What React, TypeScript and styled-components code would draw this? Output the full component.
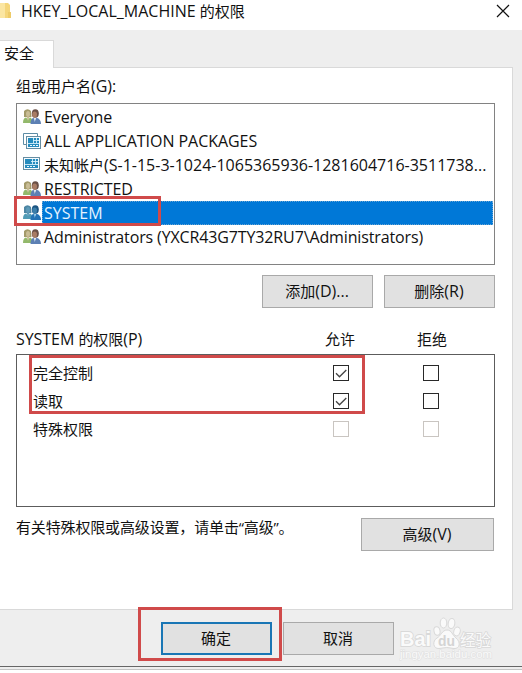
import React from 'react';
import styled, { createGlobalStyle } from 'styled-components';

const GlobalStyle = createGlobalStyle`
  * { box-sizing: border-box; }
  html, body { margin: 0; padding: 0; background: #fff; overflow: hidden; }
  body { font-family: "Open Sans", "Noto Sans CJK SC", sans-serif; font-size: 15px; color: #111; }
  svg { display: block; flex: none; }
`;

const Dialog = styled.div`
  position: relative;
  width: 522px;
  height: 673px;
  background: #fff;
  display: flex;
  flex-direction: column;
  overflow: hidden;
`;

const Line = styled.span<{ $ls?: number; $light?: boolean }>`
  line-height: 20px;
  height: 20px;
  white-space: pre;
  letter-spacing: ${(p) => p.$ls ?? 0}px;
  color: ${(p) => (p.$light ? '#e4f3ff' : 'inherit')};
`;

const Latin = styled.span`
  font-size: 16px;
  line-height: 1;
`;

/* Latin runs are set one pixel larger than the Chinese characters beside them. */
const Text = ({ children, ls, light }: { children: string; ls?: number; light?: boolean }) => (
  <Line $ls={ls} $light={light}>
    {children
      .split(/([\x20-\x7e]+)/)
      .filter(Boolean)
      .map((part, i) => (/^[\x20-\x7e]/.test(part) ? <Latin key={i}>{part}</Latin> : part))}
  </Line>
);

const TitleBar = styled.header`
  height: 30px;
  flex: none;
  display: flex;
  align-items: flex-start;
  padding: 1px 12px 0 0;
`;

const TitleText = styled.h1`
  margin: 0 auto 0 10px;
  font-size: 15px;
  font-weight: 400;
  display: flex;
`;

const CloseButton = styled.button`
  border: 0;
  padding: 0;
  margin-top: 3px;
  background: none;
`;

const Body = styled.main`
  height: 636px;
  flex: none;
  background: #eee;
  display: flex;
  flex-direction: column;
`;

const TabStrip = styled.nav`
  height: 37px;
  padding-top: 10px;
  flex: none;
`;

const Tab = styled.div`
  position: relative;
  width: 54px;
  height: 28px;
  background: #fff;
  border: 1px solid #d9d9d9;
  border-width: 1px 1px 0 0;
  padding: 2px 0 0 4px;
  display: flex;
`;

const Page = styled.section`
  width: 513px;
  height: 543px;
  flex: none;
  background: #fff;
  border: 1px solid #d9d9d9;
  border-left: 0;
  padding: 8px 17px 0 16px;
`;

const Label = styled.div`
  height: 27px;
  display: flex;
`;

const UserList = styled.ul`
  list-style: none;
  margin: 0;
  padding: 1px;
  width: 479px;
  height: 162px;
  border: 1px solid #828282;
`;

const UserRow = styled.li`
  height: 24px;
  display: flex;
  align-items: stretch;
  padding-left: 5px;
`;

const IconSlot = styled.div`
  width: 19px;
  flex: none;
  padding-top: 4px;
`;

const UserName = styled.div<{ $selected?: boolean }>`
  flex: 1;
  padding: ${(p) => (p.$selected ? '1px 0 0 1px' : '2px 0 0 2px')};
  display: flex;
  background: ${(p) => (p.$selected ? '#0078d7' : 'transparent')};
  border: ${(p) => (p.$selected ? '1px dotted #69a4d2' : '0')};
`;

const ButtonRow = styled.div`
  display: flex;
  justify-content: flex-end;
  gap: 11px;
  margin-top: 10px;
`;

const Button = styled.button<{ $width?: number; $primary?: boolean }>`
  width: ${(p) => p.$width ?? 111}px;
  height: 33px;
  flex: none;
  padding: 0 1px 2px 0;
  font: inherit;
  color: inherit;
  background: #e1e1e1;
  border: ${(p) => (p.$primary ? '2px solid #1976b5' : '1px solid #a9a9a9')};
  display: flex;
  align-items: center;
  justify-content: center;
`;

const PermissionHeader = styled.div`
  display: grid;
  grid-template-columns: 309px 92px 78px;
  height: 25px;
  margin-top: 21px;
`;

const PermissionBox = styled.div`
  height: 153px;
  width: 479px;
  border: 1px solid #5c5c5c;
  padding: 4px 0 0 16px;
`;

const PermissionRow = styled.div`
  display: grid;
  grid-template-columns: 300px 90px 60px;
  align-items: center;
  height: 28px;
`;

const PermissionName = styled.div`
  display: flex;
`;

const Check = styled.div<{ $disabled?: boolean }>`
  width: 16px;
  height: 16px;
  border: 1px solid ${(p) => (p.$disabled ? '#c9c5c1' : '#292929')};
  background: #fff;
`;

const Advanced = styled.div`
  display: flex;
  justify-content: space-between;
  width: 478px;
  padding-top: 11px;
`;

const Note = styled.div`
  display: flex;
  height: 20px;
  margin-top: -1px;
`;

const Footer = styled.footer`
  display: flex;
  gap: 11px;
  padding: 12px 0 0 161px;
`;

const Watermark = styled.div`
  width: 98px;
  height: 48px;
  margin: -6px 0 0 -6px;
`;

const BottomEdge = styled.div`
  height: 4px;
  flex: none;
  border-top: 1px solid #666;
  border-bottom: 1px solid #c4c4c4;
  background: #eee;
`;

const Highlight = styled.div<{ $x: number; $y: number; $w: number; $h: number }>`
  position: absolute;
  left: ${(p) => p.$x}px;
  top: ${(p) => p.$y}px;
  width: ${(p) => p.$w}px;
  height: ${(p) => p.$h}px;
  border: 3px solid #d04a4a;
  pointer-events: none;
`;

const UsersIcon = ({ selected }: { selected?: boolean }) => {
  const c = selected
    ? { hair: '#4d86a3', face: '#5d9ab8', shirt: '#4f9bb5', hair2: '#1d5582', face2: '#3b7eaa', suit: '#2373b5' }
    : { hair: '#a39a6a', face: '#c9bd96', shirt: '#93b96b', hair2: '#6a5046', face2: '#a97c64', suit: '#5d80b4' };
  return (
    <svg width="18" height="16" viewBox="0 0 18 16">
      <path d="M1 2Q4.5-1.5 8 2L8.5 8H1Z" fill={c.hair} />
      <ellipse cx="5" cy="5" rx="2" ry="3" fill={c.face} />
      <path d="M0 14Q0 9 3 8.5L5 10.5 7 8.5Q9.5 9 9.5 14Z" fill={c.shirt} />
      <path d="M3.6 8L5 12 6.5 8Z" fill={c.face} />
      <ellipse cx="12.3" cy="4.5" rx="3.5" ry="4.3" fill={c.hair2} />
      <ellipse cx="11.6" cy="5.6" rx="2.4" ry="3.2" fill={c.face2} />
      <path d="M7.5 15Q7.5 10 10.5 8.8L12 11 13.5 8.8Q18 10 18 15Z" fill={c.suit} />
      <path d="M10.8 9L11.8 13 12.9 9Z" fill={selected ? '#8ac3e3' : '#dde5ee'} />
    </svg>
  );
};

const PackageIcon = ({ stacked }: { stacked?: boolean }) => (
  <svg width="18" height="16" viewBox="0 0 18 16">
    {stacked && <path d="M.5 11.5V.5H14.5V3M.5 11.5H3" fill="none" stroke="#5d8ca5" />}
    <g transform={stacked ? 'translate(3 3)' : undefined}>
      <rect x=".5" y=".5" width={stacked ? 14 : 16} height="12" fill="#f4fbff" stroke="#668da2" />
      <rect x="2" y="2" width={stacked ? 11 : 13} height="9" fill="#258bbd" />
      <path
        d={stacked ? 'M7.5 2V7M10.5 2V7M7 4.5H13M2 7.5H13' : 'M9.5 2V7M12.5 2V7M8 4.5H15M2 7.5H15'}
        stroke="#d6effa"
        strokeWidth=".9"
      />
      <path d="M4 9.5H12" stroke="#e8f8ff" strokeDasharray="2 1" />
    </g>
  </svg>
);

const BaiduMark = () => (
  <svg width="98" height="48" viewBox="0 0 98 48">
    <g fill="#fafafa" stroke="#d9d9d9" strokeWidth="1">
      <ellipse cx="38" cy="15" rx="3" ry="4.3" transform="rotate(-12 38 15)" />
      <ellipse cx="44.5" cy="7" rx="3.3" ry="5" />
      <ellipse cx="52.5" cy="7.5" rx="3.3" ry="5" transform="rotate(10 52.5 7.5)" />
      <ellipse cx="58" cy="15.5" rx="3.2" ry="4.5" transform="rotate(16 58 15.5)" />
      <path d="M48 14C43 14 42 20 38 22C33 25 34 33 40 32.5Q48 30.5 55 32.5C61 33 62 26 57 22C53 19 53 14 48 14Z" />
      <text x="1" y="30" paintOrder="stroke" strokeWidth="1.8" fontFamily="Liberation Sans" fontWeight="700" fontSize="21" textLength="31" lengthAdjust="spacingAndGlyphs">Bai</text>
      <text x="61" y="30" paintOrder="stroke" strokeWidth="1.6" fontFamily="Noto Sans CJK SC" fontWeight="400" fontSize="15.5">经验</text>
      <text x="1" y="42" paintOrder="stroke" stroke="#e0e0e0" strokeWidth="1" fontFamily="Liberation Sans" fontSize="10" textLength="92" lengthAdjust="spacingAndGlyphs">jingyan.baidu.com</text>
    </g>
    <text x="39" y="30" fill="#d4d4d4" fontFamily="Liberation Sans" fontWeight="700" fontSize="15" textLength="17" lengthAdjust="spacingAndGlyphs">du</text>
  </svg>
);

const users = [
  { name: 'Everyone', icon: <UsersIcon />, ls: -0.1 },
  { name: 'ALL APPLICATION PACKAGES', icon: <PackageIcon stacked />, ls: -0.05 },
  { name: '未知帐户(S-1-15-3-1024-1065365936-1281604716-3511738...', icon: <PackageIcon />, ls: 0 },
  { name: 'RESTRICTED', icon: <UsersIcon />, ls: -0.15 },
  { name: 'SYSTEM', icon: <UsersIcon selected />, ls: 0, selected: true },
  { name: 'Administrators (YXCR43G7TY32RU7\\Administrators)', icon: <UsersIcon />, ls: -0.13 },
];

const permissions = [
  { name: '完全控制', allow: true },
  { name: '读取', allow: true },
  { name: '特殊权限', allow: false, disabled: true },
];

const CheckMark = () => (
  <svg width="14" height="14" viewBox="0 0 14 14">
    <path d="M2 7.3L5.5 10.8 12.3 4" fill="none" stroke="#444" strokeWidth="1.3" />
  </svg>
);

export default function App() {
  return (
    <>
      <GlobalStyle />
      <Dialog>
        <TitleBar>
          <svg width="11" height="18" viewBox="0 0 11 18">
            <path d="M0 2H8L10 4V17H0Z" fill="#f5d67b" />
            <path d="M0 2H5V17H0Z" fill="#fbe6a2" />
            <path d="M8 11H11V17H8Z" fill="#eecb68" />
          </svg>
          <TitleText>
            <Text>HKEY_LOCAL_MACHINE 的权限</Text>
          </TitleText>
          <CloseButton aria-label="关闭">
            <svg width="14" height="14" viewBox="0 0 14 14">
              <path d="M1 1L13 13M13 1L1 13" stroke="#111" strokeWidth="1.2" />
            </svg>
          </CloseButton>
        </TitleBar>
        <Body>
          <TabStrip>
            <Tab><Text>安全</Text></Tab>
          </TabStrip>
          <Page>
            <Label><Text>组或用户名(G):</Text></Label>
            <UserList>
              {users.map((u) => (
                <UserRow key={u.name}>
                  <IconSlot>{u.icon}</IconSlot>
                  <UserName $selected={u.selected}>
                    <Text ls={u.ls} light={u.selected}>{u.name}</Text>
                  </UserName>
                </UserRow>
              ))}
            </UserList>
            <ButtonRow>
              <Button><Text>添加(D)...</Text></Button>
              <Button><Text>删除(R)</Text></Button>
            </ButtonRow>
            <PermissionHeader>
              <Text ls={-0.05}>SYSTEM 的权限(P)</Text>
              <Text>允许</Text>
              <Text>拒绝</Text>
            </PermissionHeader>
            <PermissionBox>
              {permissions.map((p) => (
                <PermissionRow key={p.name}>
                  <PermissionName><Text>{p.name}</Text></PermissionName>
                  <Check $disabled={p.disabled}>{p.allow && <CheckMark />}</Check>
                  <Check $disabled={p.disabled} />
                </PermissionRow>
              ))}
            </PermissionBox>
            <Advanced>
              <Note><Text ls={-0.15}>有关特殊权限或高级设置，请单击“高级”。</Text></Note>
              <Button $width={133}><Text>高级(V)</Text></Button>
            </Advanced>
          </Page>
          <Footer>
            <Button $primary><Text>确定</Text></Button>
            <Button><Text>取消</Text></Button>
            <Watermark><BaiduMark /></Watermark>
          </Footer>
        </Body>
        <BottomEdge />
        <Highlight $x={14} $y={196} $w={147} $h={30} />
        <Highlight $x={29} $y={355} $w={336} $h={59} />
        <Highlight $x={138} $y={607} $w={144} $h={54} />
      </Dialog>
    </>
  );
}
